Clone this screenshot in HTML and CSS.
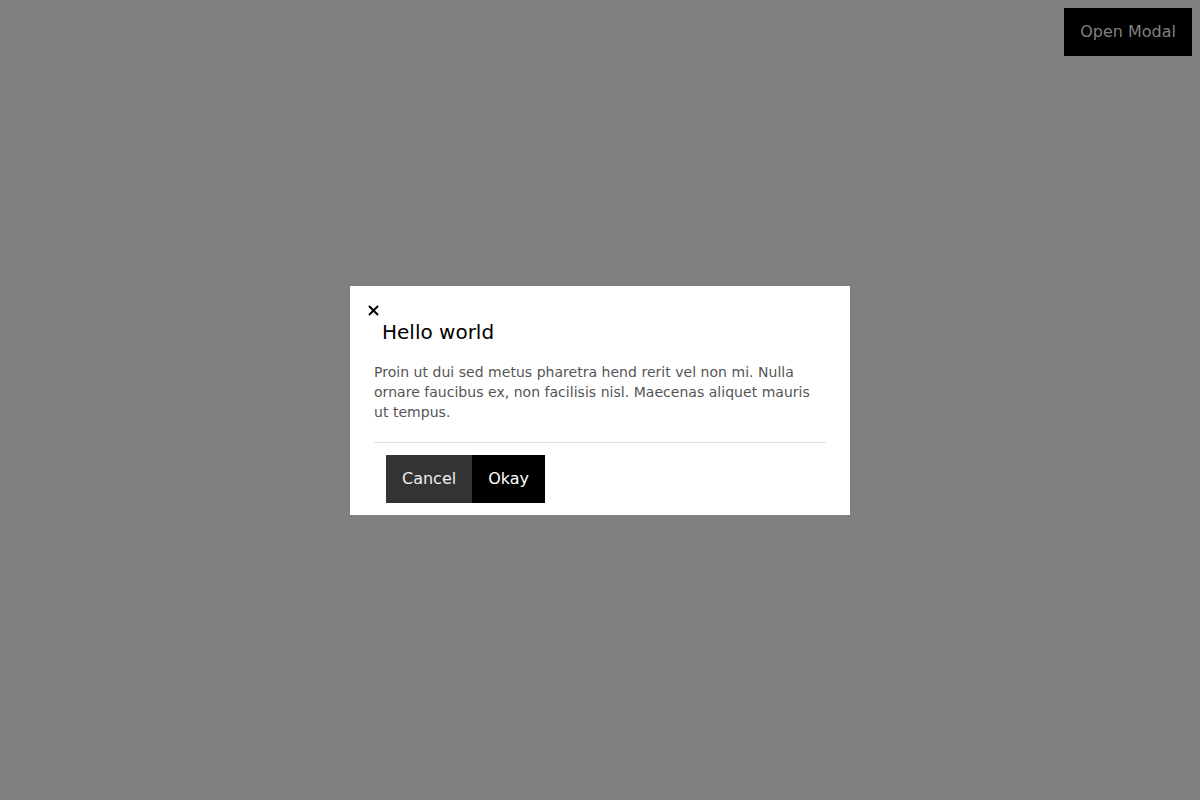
FILE: index.html
```html
<!DOCTYPE html>
<html lang="en">
<head>
<meta charset="utf-8">
<title>Modal</title>
<link rel="stylesheet" href="styles.css">
</head>
<body>
<header class="topbar">
  <button class="open-btn" type="button">Open Modal</button>
</header>
<div class="overlay">
  <div class="modal" role="dialog">
    <button class="close" type="button" aria-label="Close">
      <svg width="11" height="11" viewBox="0 0 11 11" aria-hidden="true"><path d="M1 1 L10 10 M10 1 L1 10" stroke="#000" stroke-width="2" fill="none"/></svg>
    </button>
    <h2 class="title">Hello world</h2>
    <p class="body">Proin ut dui sed metus pharetra hend rerit vel non mi. Nulla ornare faucibus ex, non facilisis nisl. Maecenas aliquet mauris ut tempus.</p>
    <div class="divider"></div>
    <div class="footer">
      <button class="btn btn-cancel" type="button">Cancel</button>
      <button class="btn btn-okay" type="button">Okay</button>
    </div>
  </div>
</div>
</body>
</html>
```
FILE: styles.css
```css
html, body {
  margin: 0;
  height: 100%;
}
body {
  background: #808080;
  font-family: "DejaVu Sans", sans-serif;
}
.topbar {
  display: flex;
  justify-content: flex-end;
  padding: 8px;
}
.open-btn {
  height: 48px;
  padding: 0 16px 2px;
  border: 0;
  background: #000;
  color: #808080;
  font-family: "DejaVu Sans", sans-serif;
  font-size: 16px;
}
.overlay {
  position: fixed;
  inset: 0;
  display: flex;
  align-items: center;
  justify-content: center;
}
.modal {
  width: 500px;
  box-sizing: border-box;
  background: #fff;
  padding: 0 24px;
}
.close {
  display: block;
  margin: 19px 0 0 -6px;
  padding: 0;
  width: 11px;
  height: 11px;
  border: 0;
  background: none;
}
.close svg {
  display: block;
}
.title {
  margin: 4px 0 0 8px;
  font-size: 20px;
  line-height: 24px;
  font-weight: normal;
  color: #000;
}
.body {
  margin: 18px 0 0;
  font-size: 14px;
  line-height: 20px;
  color: #555;
  letter-spacing: 0.03px;
}
.divider {
  margin-top: 20px;
  height: 1px;
  background: #ddd;
}
.footer {
  display: flex;
  padding: 12px;
}
.btn {
  height: 48px;
  padding: 0 16px;
  border: 0;
  font-family: "DejaVu Sans", sans-serif;
  font-size: 16px;
  color: #fff;
}
.btn-cancel {
  background: #333;
  color: #eee;
}
.btn-okay {
  background: #000;
}
```
